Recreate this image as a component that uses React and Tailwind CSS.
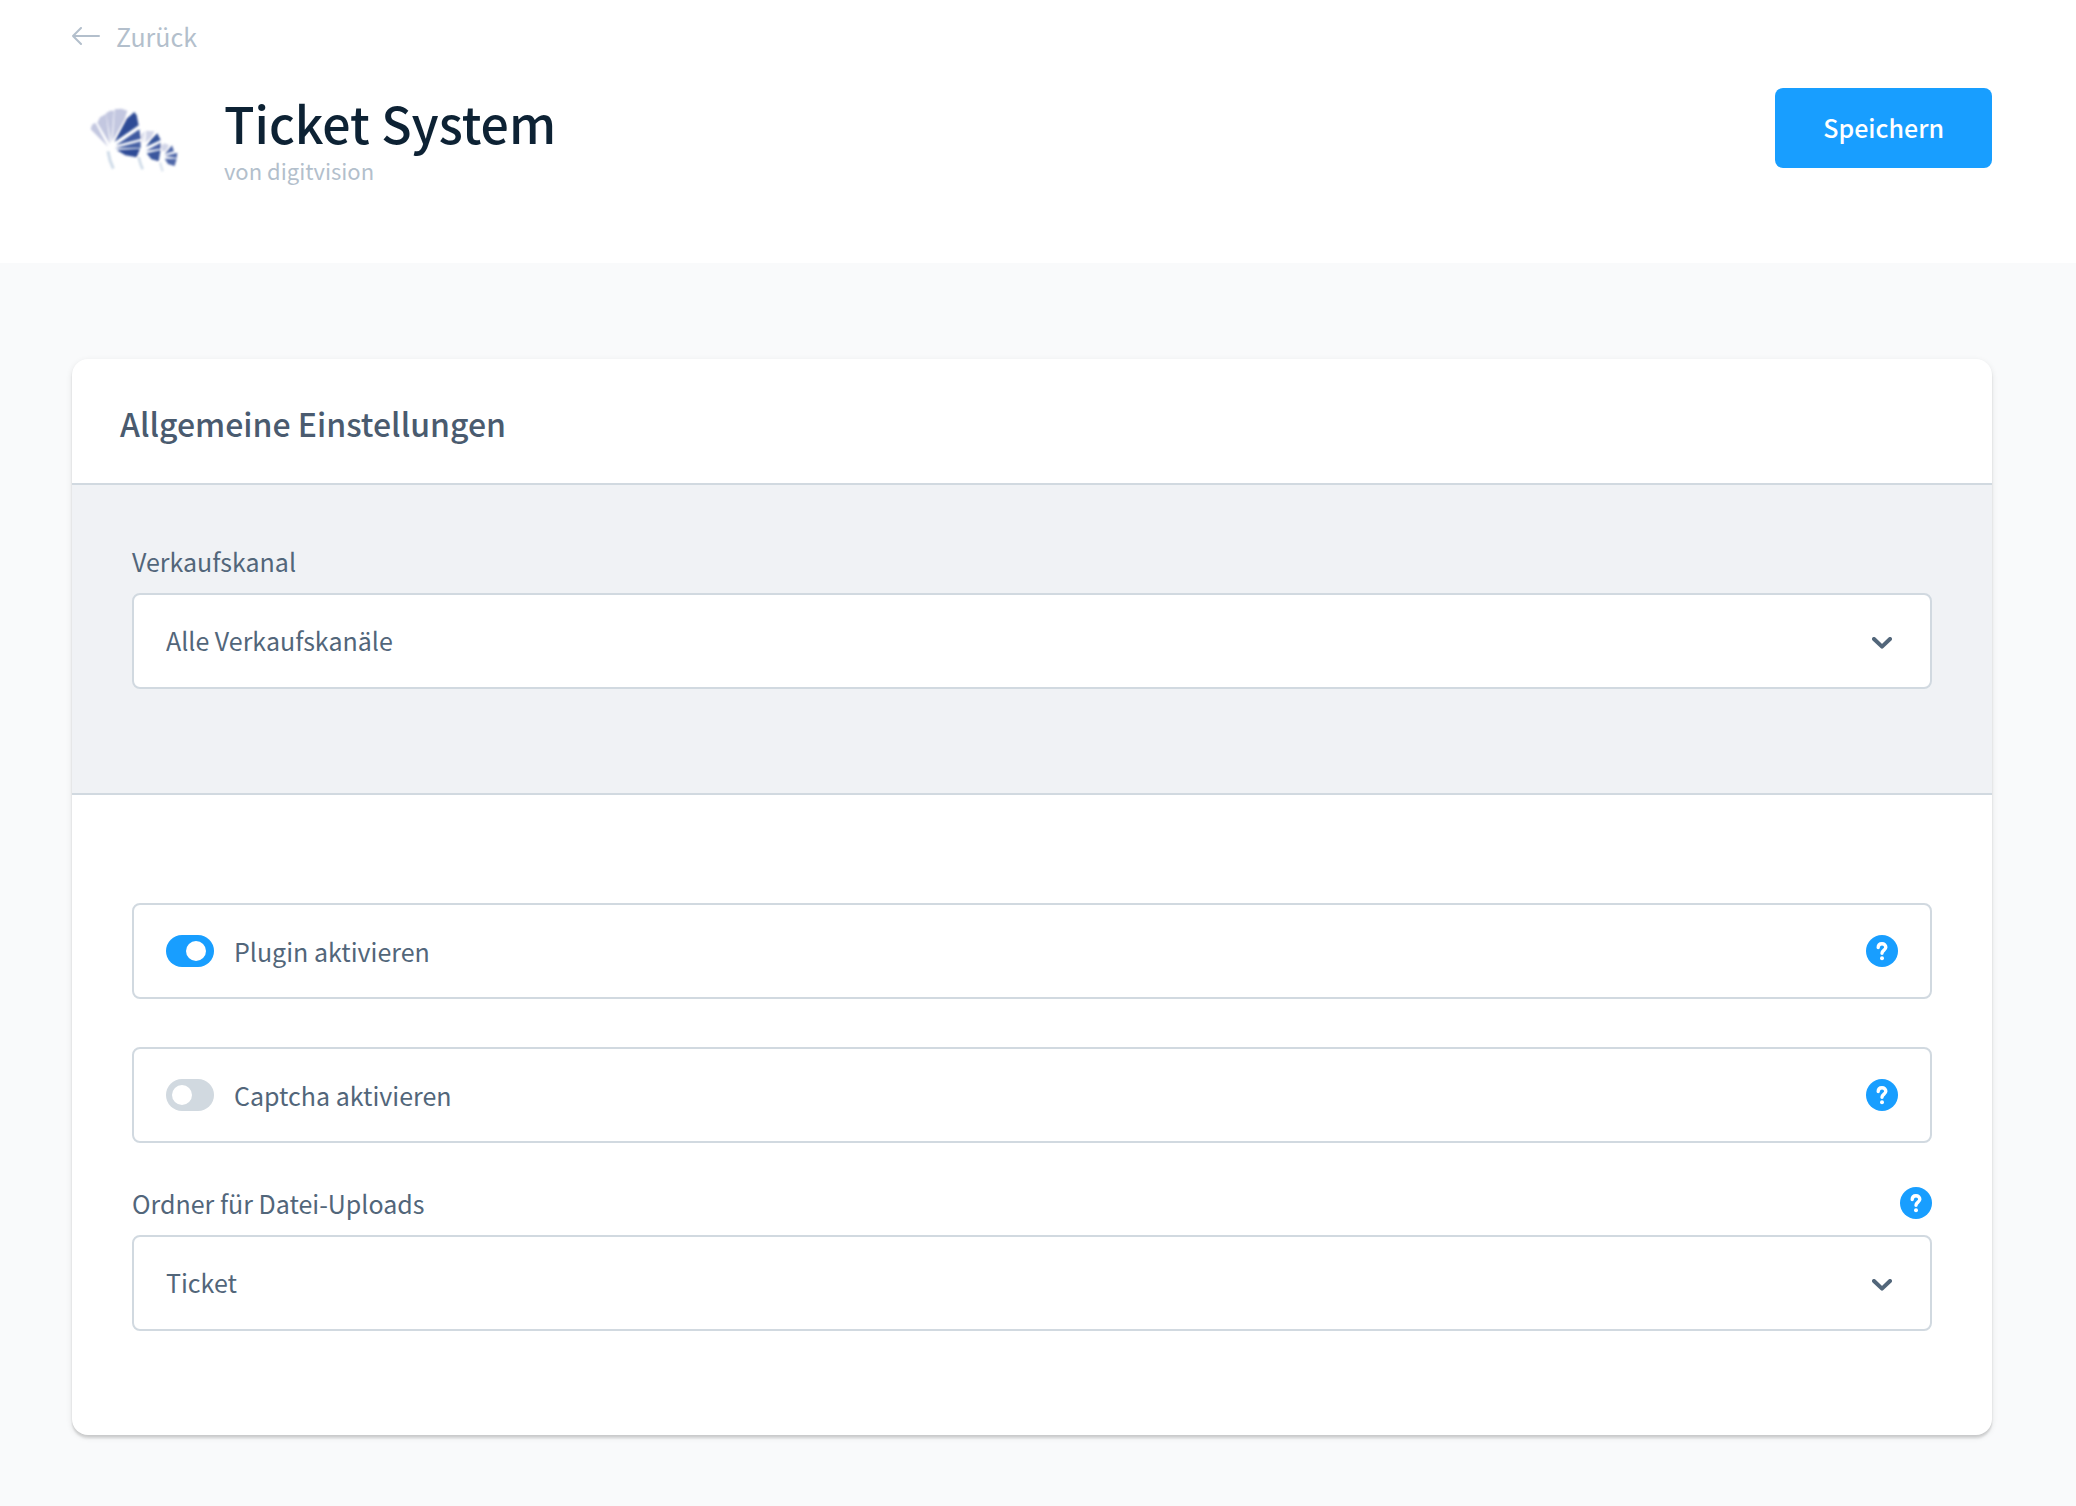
import React, { useState } from 'react';

const channels = ['Alle Verkaufskanäle'];
const folders = ['Ticket'];

function PluginLogo() {
  return (
    <svg width="110" height="90" viewBox="0 0 330 270" aria-hidden="true">
      <defs>
        <filter id="soften" x="-10%" y="-10%" width="120%" height="120%">
          <feGaussianBlur stdDeviation="3" />
        </filter>
      </defs>
      <g filter="url(#soften)">
        {/* large fan */}
        <path fill="#c3c7e0" d="M84 158 32 106 36 92 46 86ZM90 150 52 86 60 70 78 60ZM94 146 78 58 90 50 102 50ZM98 140 104 46 124 44 142 50 134 76Z" />
        <path fill="#2f4c96" d="M103 144 140 74 163 54 170 64 176 94Z" />
        <path fill="#3f5aa0" d="M108 154 178 106 183 134Z" />
        <path fill="#4a63a6" d="M104 163 182 142 182 162Z" />
        <path fill="#2f4c96" d="M110 168 180 164 170 190 136 184Z" />
        <path fill="none" stroke="#cfdbe8" strokeWidth="9" d="M84 172Q88 200 100 224" />
        {/* middle fan */}
        <path fill="#d3d6e8" d="M188 150 184 122 194 110ZM196 146 198 110 224 112 214 130Z" />
        <path fill="#35529a" d="M198 158 214 136 232 118 242 138Z" />
        <path fill="#4861a5" d="M198 170 242 146 242 164Z" />
        <path fill="#3b569d" d="M200 178 242 168 236 202 214 196Z" />
        <path fill="none" stroke="#cfdbe8" strokeWidth="8" d="M176 190Q180 208 188 226" />
        {/* small fan */}
        <path fill="#d3d6e8" d="M246 172 244 154 254 148 268 154 258 170Z" />
        <path fill="#5068a9" d="M254 180 276 154 282 172ZM254 186 292 176 290 192ZM254 194 290 194 284 216 264 210Z" />
        <path fill="none" stroke="#dbe4ee" strokeWidth="7" d="M240 206 248 232" />
      </g>
    </svg>
  );
}

function HelpButton({ topic }) {
  return (
    <button type="button" aria-label={`Hilfe: ${topic}`} className="shrink-0 rounded-full">
      <svg width="32" height="32" viewBox="0 0 32 32" fill="none">
        <circle cx="16" cy="16" r="16" fill="#189eff" />
        <path
          d="M12.2 12.6C12.2 10.2 13.8 8.7 16 8.7s3.8 1.5 3.8 3.5c0 2.8-3.8 3-3.8 6.1"
          stroke="#fff"
          strokeWidth="3.4"
          strokeLinecap="round"
          strokeLinejoin="round"
        />
        <circle cx="16" cy="23.2" r="2" fill="#fff" />
      </svg>
    </button>
  );
}

function SelectField({ id, label, options, help }) {
  return (
    <div>
      <div className="mb-4 flex items-center justify-between">
        <label htmlFor={id} className="leading-8">
          {label}
        </label>
        {help && <HelpButton topic={label} />}
      </div>
      <div className="relative">
        <select
          id={id}
          className="block h-24 w-full appearance-none rounded-lg border-2 border-[#d1d9e0] bg-white px-8"
        >
          {options.map((option) => (
            <option key={option}>{option}</option>
          ))}
        </select>
        <svg
          className="pointer-events-none absolute top-11 right-10"
          width="20"
          height="13"
          viewBox="0 0 20 13"
          fill="none"
          stroke="#52667a"
          strokeWidth="4"
          strokeLinecap="round"
          strokeLinejoin="round"
        >
          <path d="M2 2l8 7.6L18 2" />
        </svg>
      </div>
    </div>
  );
}

function SwitchField({ id, label, defaultChecked }) {
  const [checked, setChecked] = useState(defaultChecked);

  return (
    <div className="flex h-24 items-center justify-between rounded-lg border-2 border-[#d1d9e0] px-8">
      <div className="flex items-center gap-5">
        <input
          id={id}
          type="checkbox"
          role="switch"
          checked={checked}
          onChange={(e) => setChecked(e.target.checked)}
          className="flex h-8 w-12 appearance-none items-center rounded-full bg-[#d1d9e0] px-[6px] before:size-5 before:rounded-full before:bg-white checked:bg-[#189eff] checked:pl-5"
        />
        <label htmlFor={id} className="leading-8">
          {label}
        </label>
      </div>
      <HelpButton topic={label} />
    </div>
  );
}

export default function App() {
  return (
    <div className="min-h-screen bg-[#f9fafb] font-['Noto_Sans_CJK_SC','Noto_Sans',sans-serif] text-[25px] text-[#52667a]">
      {/* Header */}
      <header className="bg-white pt-4 pr-[84px] pb-[73px] pl-[72px]">
        <a href="#" className="flex w-fit items-center gap-4 leading-10 text-[#b3bfcc]">
          <svg
            width="28"
            height="18"
            viewBox="0 0 28 18"
            fill="none"
            stroke="currentColor"
            strokeWidth="2"
            strokeLinecap="round"
            strokeLinejoin="round"
          >
            <path d="M27 9H1M9 1 1 9l8 8" />
          </svg>
          Zurück
        </a>
        <div className="mt-8 flex items-start justify-between">
          <div className="flex items-start gap-[34px] pt-[6px] pl-2">
            <PluginLogo />
            <div>
              <h1 className="text-[50px] leading-[56px] font-medium text-[#0d2234]">Ticket System</h1>
              <p className="text-[22px] leading-10 text-[#b3bfcc]">von digitvision</p>
            </div>
          </div>
          <button
            type="button"
            className="h-20 rounded-lg bg-[#189eff] px-12 font-medium text-white"
          >
            Speichern
          </button>
        </div>
      </header>

      {/* Settings */}
      <main className="pt-24 pr-[84px] pb-[71px] pl-[72px]">
        <section className="overflow-hidden rounded-2xl bg-white shadow-[0_2px_2px_rgba(0,0,0,0.08),0_4px_2px_rgba(0,0,0,0.06),0_2px_6px_rgba(0,0,0,0.1)]">
          <h2 className="border-b-2 border-[#d1d9e0] px-12 pt-[42px] pb-[38px] text-[32px] leading-[44px] font-medium text-[#4a5b6f]">
            Allgemeine Einstellungen
          </h2>
          <div className="border-b-2 border-[#d1d9e0] bg-[#f0f2f5] px-[60px] pt-[60px] pb-[104px]">
            <SelectField id="channel" label="Verkaufskanal" options={channels} />
          </div>
          <div className="px-[60px] pt-[108px] pb-[104px]">
            <div className="mb-11 space-y-12">
              <SwitchField id="plugin-active" label="Plugin aktivieren" defaultChecked />
              <SwitchField id="captcha-active" label="Captcha aktivieren" defaultChecked={false} />
            </div>
            <SelectField id="upload-folder" label="Ordner für Datei-Uploads" options={folders} help />
          </div>
        </section>
      </main>
    </div>
  );
}
